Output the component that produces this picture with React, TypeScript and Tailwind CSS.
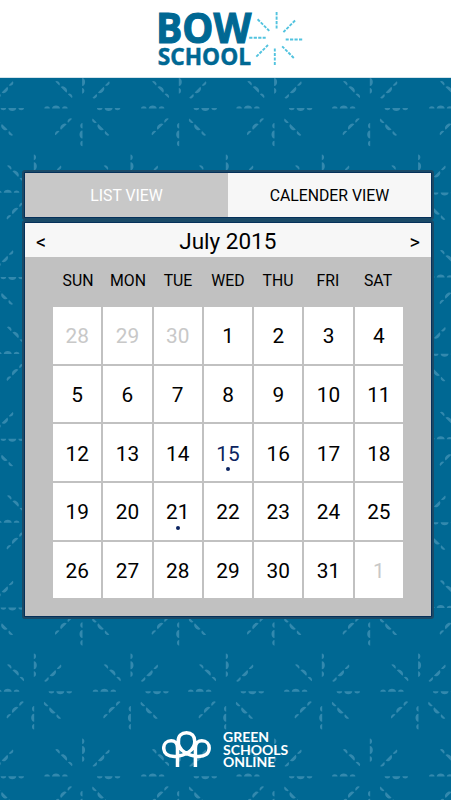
const DAYS = ['SUN', 'MON', 'TUE', 'WED', 'THU', 'FRI', 'SAT']

const WEEKS = [
  [28, 29, 30, 1, 2, 3, 4],
  [5, 6, 7, 8, 9, 10, 11],
  [12, 13, 14, 15, 16, 17, 18],
  [19, 20, 21, 22, 23, 24, 25],
  [26, 27, 28, 29, 30, 31, 1],
]

const ODD_COLUMNS = [34, 130.7, 226, 322, 418.3]
const EVEN_COLUMNS = [-14, 82.3, 179, 274.3, 370, 467]
const BURST_ROWS = [108.3, 192.6, 277.3, 353.9, 439, 522.5, 607.7, 691.5, 776.4]
const ANGLES = [0, 45, 90, 135, 180, 225, 270, 315]

const Pattern = () => (
  <svg className="absolute inset-0 h-full w-full" viewBox="0 0 451 800" aria-hidden="true">
    <defs>
      <path id="ray" d="M-38 .2C-38 -2.8 -32.4 -2.8 -32.4 .2ZM-30.3 .2C-30.3 -3.8 -22.3 -3.8 -22.3 .2ZM-20.2 .2C-20.2 -2.8 -14.6 -2.8 -14.6 .2Z" />
      <g id="burst" fill="#3389ae">
        {ANGLES.map((angle) => (
          <use key={angle} href="#ray" transform={`rotate(${angle})`} />
        ))}
      </g>
    </defs>
    {BURST_ROWS.map((y, row) =>
      (row % 2 ? ODD_COLUMNS : EVEN_COLUMNS).map((x) => <use key={`${x}-${y}`} href="#burst" x={x} y={y} />),
    )}
  </svg>
)

const SchoolLogo = () => (
  <svg className="h-[72px] w-[150px] overflow-visible" viewBox="156 0 150 72" role="img" aria-label="Bow School">
    <g fill="#006893" stroke="#006893" fontFamily="Open Sans, sans-serif" fontWeight="700">
      <text x="156" y="42.6" fontSize="41" strokeWidth="1.1" textLength="95.3" lengthAdjust="spacingAndGlyphs">BOW</text>
      <text x="157.8" y="64.6" fontSize="23.8" strokeWidth=".5" textLength="93.2" lengthAdjust="spacingAndGlyphs">SCHOOL</text>
    </g>
    <g stroke="#52c3df" strokeWidth="1.9" strokeDasharray="3.2 1.3">
      {ANGLES.map((angle) => (
        <path key={angle} d="M-26.5 -.9H-10" transform={`translate(275.7 38.6) rotate(${angle})`} />
      ))}
    </g>
  </svg>
)

const TreesIcon = () => (
  <svg className="h-9 w-[49px]" viewBox="162 731 49 36" fill="none" stroke="#fff" strokeWidth="3.5">
    <path d="M177.5 767V748C177.5 743 174.5 740.8 171.2 740.8C166.5 740.8 163.7 744 163.7 748C163.7 753.5 168 756.4 174.5 756.4C186 756.4 194.8 749.5 194.8 741.5C194.8 736 191.5 732.8 186.5 732.8C181.5 732.8 178.2 736 178.2 741.5C178.2 749.5 187 756.4 198.5 756.4C205 756.4 209.2 753.5 209.2 748C209.2 744 206.5 740.8 201.8 740.8C198.5 740.8 195.4 743 195.4 748V767" />
  </svg>
)

const cellColor = (week: number, date: number) => {
  if ((week === 0 && date > 20) || (week === 4 && date === 1)) return 'text-[#c8c8c8]'
  return date === 15 ? 'text-[#0b2460]' : 'text-black'
}

export default function App() {
  return (
    <div className="relative flex h-[800px] w-[451px] flex-col overflow-hidden bg-[#006893] font-[Roboto,sans-serif] text-black">
      <Pattern />
      <header className="relative flex h-[78px] shrink-0 justify-center border-b border-[#d3e3eb] bg-white pl-[11px]">
        <SchoolLogo />
      </header>

      <main className="relative mx-[22px] mt-[92px] w-[412px] shrink-0">
        <div className="h-[50px] rounded-[3px] border-2 border-[#1b4a67] bg-[#05305a] p-px">
          <div className="flex h-full text-[15.8px]">
            <button className="w-[203px] bg-[#c8c8c8] pt-0.5 text-white">LIST VIEW</button>
            <button className="flex-1 bg-[#f7f7f7] pt-0.5">CALENDER VIEW</button>
          </div>
        </div>
        <section className="h-[399px] rounded-[3px] border-2 border-[#1b4a67] bg-[#05305a] p-px">
          <div className="h-full bg-[#c1c1c1]">
            <div className="flex h-[34px] items-center justify-between bg-[#f7f7f7] px-[11px] pt-[3px]">
              <button className="text-xl">&lt;</button>
              <h1 className="text-[22.5px]">July 2015</h1>
              <button className="text-xl">&gt;</button>
            </div>
            <div className="mx-7 grid h-[50px] grid-cols-7 items-center pb-[3px] text-center text-[15.8px]">
              {DAYS.map((day) => (
                <span key={day}>{day}</span>
              ))}
            </div>
            <div className="ml-7 grid w-[350px] grid-cols-7 gap-x-[2px] gap-y-[2.2px]">
              {WEEKS.map((dates, week) =>
                dates.map((date, i) => (
                  <div key={`${week}-${i}`} className={`relative flex h-[56.5px] items-center justify-center bg-white pt-[3px] text-[20.8px] ${cellColor(week, date)}`}>
                    {date}
                    {(date === 15 || date === 21) && <i className="absolute bottom-[9.5px] h-1 w-1 rounded-full bg-[#0b2460]" />}
                  </div>
                )),
              )}
            </div>
          </div>
        </section>
      </main>

      <footer className="relative mt-[112px] ml-[162px] flex items-start">
        <TreesIcon />
        <p className="ml-3 font-[Lato,sans-serif] text-[14px] leading-[12.6px] font-bold text-white">
          GREEN
          <br />
          SCHOOLS
          <br />
          ONLINE
        </p>
      </footer>
    </div>
  )
}
